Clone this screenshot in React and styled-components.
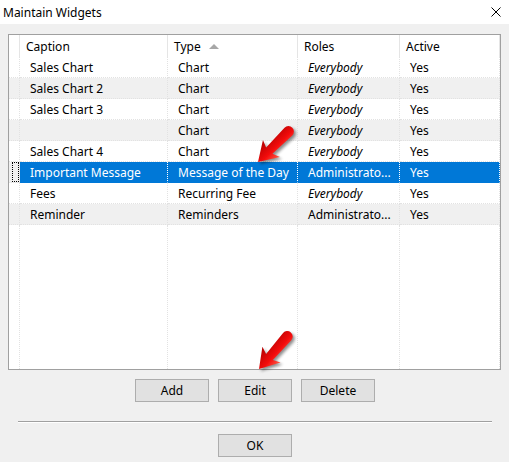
import React from "react"
import styled, { createGlobalStyle } from "styled-components"

const GlobalStyle = createGlobalStyle`
  html, body {
    margin: 0;
    padding: 0;
    background: #f0f0f0;
  }
  * {
    box-sizing: border-box;
  }
`

const COLUMNS = "11px 148px 130px 102px 100px"

const Window = styled.div`
  position: relative;
  width: 509px;
  height: 462px;
  background: #f0f0f0;
  font-family: "Noto Sans", "Open Sans", sans-serif;
  font-size: 12px;
  color: #000;
  display: flex;
  flex-direction: column;
  overflow: hidden;
`

const TitleBar = styled.div`
  height: 24px;
  background: #fff;
  display: flex;
  align-items: center;
  justify-content: space-between;
  padding-left: 3px;
  padding-right: 8px;
`

const Title = styled.span`
  font-size: 12px;
`

const CloseIcon = styled.svg`
  width: 10px;
  height: 10px;
  display: block;
`

const Body = styled.div`
  padding: 10px 8px 0 8px;
  display: flex;
  flex-direction: column;
`

const Grid = styled.div`
  height: 336px;
  border: 1px solid #a0a0a0;
  background: #fff;
  display: flex;
  flex-direction: column;
`

const HeaderRow = styled.div`
  display: grid;
  grid-template-columns: ${COLUMNS};
  height: 22px;
`

const HeaderCell = styled.div`
  display: flex;
  align-items: center;
  padding-left: 6px;
  border-right: 1px solid #e5e5e5;
  white-space: nowrap;
`

const SortArrow = styled.span`
  margin-left: 8px;
  width: 0;
  height: 0;
  border-left: 5px solid transparent;
  border-right: 5px solid transparent;
  border-bottom: 5px solid #a7a7a7;
`

const Row = styled.div`
  display: grid;
  grid-template-columns: ${COLUMNS};
  height: 21px;
  background: ${({ $selected, $alt }) =>
    $selected ? "#0078d7" : $alt ? "#f0f0f0" : "#fff"};
  color: ${({ $selected }) => ($selected ? "#fff" : "#000")};
`

const Filler = styled.div`
  display: grid;
  grid-template-columns: ${COLUMNS};
  flex: 1;
`

const Cell = styled.div`
  display: flex;
  align-items: center;
  padding-left: 10px;
  border-right: 1px dotted
    ${({ $selected }) => ($selected ? "#ffffff" : "#e2e2e2")};
  border-bottom: 1px dotted
    ${({ $selected }) => ($selected ? "#0078d7" : "#e2e2e2")};
  white-space: nowrap;
  overflow: hidden;
  font-style: ${({ $italic }) => ($italic ? "italic" : "normal")};
`

const FillCell = styled.div`
  border-right: 1px dotted #e2e2e2;
`

const Indicator = styled.div`
  display: flex;
  align-items: center;
  justify-content: center;
  background: ${({ $alt }) => ($alt ? "#f0f0f0" : "#fff")};
  border-right: 1px dotted #e2e2e2;
  border-bottom: 1px dotted #e2e2e2;
`

const FocusMark = styled.span`
  width: 8px;
  height: 20px;
  margin-left: 3px;
  border: 1px dotted #000;
`

const ButtonRow = styled.div`
  display: flex;
  justify-content: center;
  gap: 9px;
  margin-top: 9px;
  padding-left: 1px;
`

const Button = styled.button`
  width: 74px;
  height: 23px;
  background: #e1e1e1;
  border: 1px solid #adadad;
  font-family: inherit;
  font-size: 12px;
  color: #000;
  padding: 0;
`

const Separator = styled.div`
  margin: 19px 17px 0 18px;
  height: 2px;
  border-top: 1px solid #a0a0a0;
  border-bottom: 1px solid #fff;
`

const Footer = styled.div`
  display: flex;
  justify-content: center;
  margin-top: 11px;
  padding-left: 1px;
`

const Pointer = styled.svg`
  position: absolute;
  left: ${({ $x }) => $x}px;
  top: ${({ $y }) => $y}px;
  width: 60px;
  height: 60px;
  overflow: visible;
  pointer-events: none;
`

const widgets = [
  { caption: "Sales Chart", type: "Chart", roles: "Everybody", active: "Yes" },
  { caption: "Sales Chart 2", type: "Chart", roles: "Everybody", active: "Yes" },
  { caption: "Sales Chart 3", type: "Chart", roles: "Everybody", active: "Yes" },
  { caption: "", type: "Chart", roles: "Everybody", active: "Yes" },
  { caption: "Sales Chart 4", type: "Chart", roles: "Everybody", active: "Yes" },
  {
    caption: "Important Message",
    type: "Message of the Day",
    roles: "Administrato...",
    active: "Yes",
    selected: true,
  },
  { caption: "Fees", type: "Recurring Fee", roles: "Everybody", active: "Yes" },
  { caption: "Reminder", type: "Reminders", roles: "Administrato...", active: "Yes" },
]

function RedArrow({ x, y, angle, id }) {
  // tip sits at (8, 52) inside the box; the arrow body points back along -x
  const body =
    "M0,0 L-19,-12 L-16,-4.5 L-43,-5.5 A5.5,5.5 0 0 0 -43,5.5 L-16,4.5 L-19,12 Z"
  return (
    <Pointer $x={x} $y={y} viewBox="0 0 60 60">
      <defs>
        <linearGradient id={id} x1="0" y1="-12" x2="0" y2="12" gradientUnits="userSpaceOnUse">
          <stop offset="0" stopColor="#ff5a48" />
          <stop offset="0.4" stopColor="#f40c0c" />
          <stop offset="1" stopColor="#b20000" />
        </linearGradient>
        <filter id={id + "-blur"} x="-50%" y="-50%" width="200%" height="200%">
          <feGaussianBlur stdDeviation="1.5" />
        </filter>
      </defs>
      <g transform={`translate(10 54) rotate(${angle})`} opacity="0.45">
        <path d={body} fill="#000" filter={`url(#${id}-blur)`} />
      </g>
      <g transform={`translate(8 52) rotate(${angle})`}>
        <path d={body} fill={`url(#${id})`} />
      </g>
    </Pointer>
  )
}

function App() {
  return (
    <Window>
      <GlobalStyle />
      <TitleBar>
        <Title>Maintain Widgets</Title>
        <CloseIcon viewBox="0 0 10 10">
          <path d="M0.5 0.5 L9.5 9.5 M9.5 0.5 L0.5 9.5" stroke="#000" strokeWidth="1" />
        </CloseIcon>
      </TitleBar>
      <Body>
        <Grid>
          <HeaderRow>
            <HeaderCell />
            <HeaderCell>Caption</HeaderCell>
            <HeaderCell>
              Type
              <SortArrow />
            </HeaderCell>
            <HeaderCell>Roles</HeaderCell>
            <HeaderCell>Active</HeaderCell>
          </HeaderRow>
          {widgets.map((w, i) => {
            const alt = i % 2 === 1
            return (
              <Row key={i} $alt={alt} $selected={w.selected}>
                <Indicator $alt={alt}>{w.selected && <FocusMark />}</Indicator>
                <Cell $selected={w.selected}>{w.caption}</Cell>
                <Cell $selected={w.selected}>{w.type}</Cell>
                <Cell $selected={w.selected} $italic={w.roles === "Everybody"}>
                  {w.roles}
                </Cell>
                <Cell $selected={w.selected}>{w.active}</Cell>
              </Row>
            )
          })}
          <Filler>
            <FillCell />
            <FillCell />
            <FillCell />
            <FillCell />
            <FillCell />
          </Filler>
        </Grid>
        <ButtonRow>
          <Button>Add</Button>
          <Button>Edit</Button>
          <Button>Delete</Button>
        </ButtonRow>
      </Body>
      <Separator />
      <Footer>
        <Button>OK</Button>
      </Footer>
      <RedArrow id="arrow-grid" x={250} y={110} angle={135} />
      <RedArrow id="arrow-edit" x={251} y={317} angle={131} />
    </Window>
  )
}

export default App
